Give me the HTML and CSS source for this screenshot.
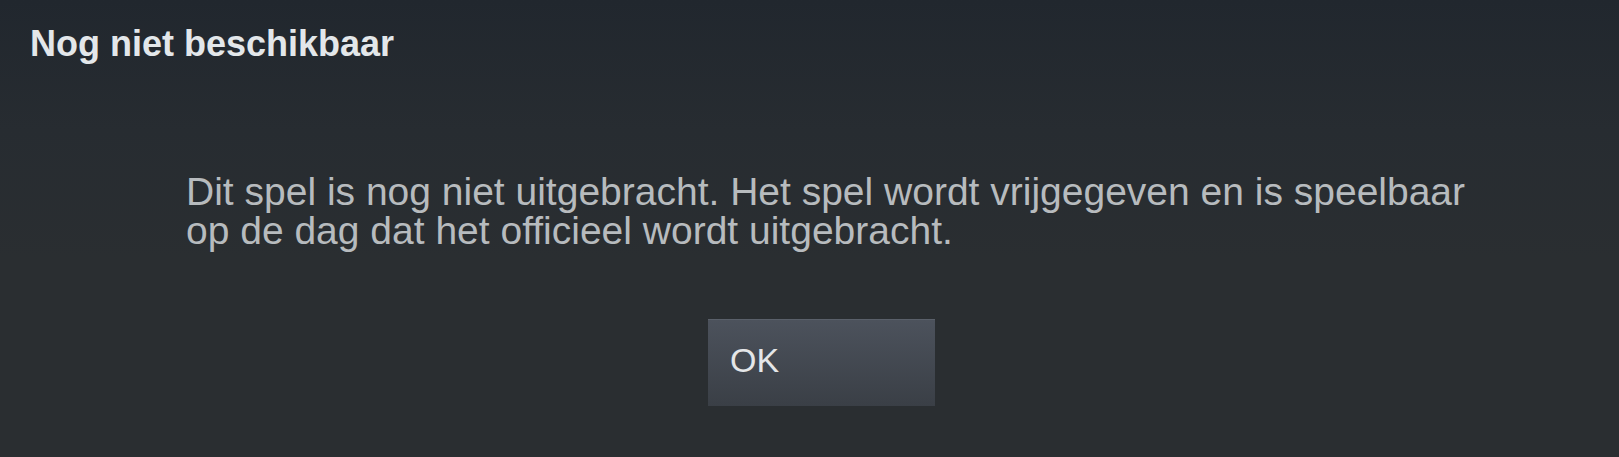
FILE: index.html
```html
<!DOCTYPE html>
<html lang="nl">
<head>
  <meta charset="UTF-8" />
  <title>Nog niet beschikbaar</title>
  <link rel="stylesheet" href="styles.css">
</head>
<body>
  <div class="dialog">
    <h1 class="dialog-title">Nog niet beschikbaar</h1>

    <div class="dialog-body">
      <p class="message">Dit spel is nog niet uitgebracht. Het spel wordt vrijgegeven en is speelbaar op de dag dat het officieel wordt uitgebracht.</p>

      <div class="buttons">
        <button type="button" class="btn">OK</button>
      </div>
    </div>
  </div>
</body>
</html>
```

FILE: styles.css
```css
html, body {
  height: 100%;
}

body {
  margin: 0;
  background: #2a2e31;
  font-family: 'Liberation Sans', Arial, sans-serif;
  color: #b9bdc0;
}

.dialog {
  min-height: 100%;
  box-sizing: border-box;
  background: linear-gradient(to bottom, #21272e 0px, #272c31 130px, #2a2e31 260px);
}

.dialog-title {
  margin: 0;
  padding: 24px 0 0 30px;
  font-size: 36px;
  line-height: 40px;
  font-weight: 700;
  color: #e3e7ea;
}

.dialog-body {
  padding: 108px 130px 0 186px;
}

.message {
  margin: 0;
  font-size: 39px;
  line-height: 39px;
  color: #b7bbbe;
}

/* button row is centred under the text block, not the window */
.buttons {
  display: flex;
  justify-content: center;
  margin-top: 69px;
  padding-right: 32px;
}

.btn {
  width: 227px;
  height: 87px;
  padding: 0 0 5px 22px;
  text-align: left;
  border: none;
  border-top: 1px solid #5a606a;
  background: linear-gradient(to bottom, #4c525c, #3a3f46);
  font-family: inherit;
  font-size: 34px;
  color: #e4e6e8;
  cursor: pointer;
}

.btn:hover {
  background: linear-gradient(to bottom, #565d68, #40454d);
}
```
